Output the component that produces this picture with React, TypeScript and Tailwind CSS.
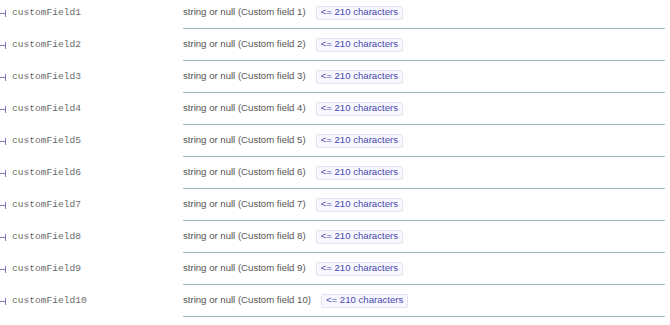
import React from "react";

const rows = Array.from({ length: 10 }, (_, i) => i + 1);

export default function App() {
  return (
    <div className="w-[670px] h-[325px] overflow-hidden bg-white">
      <div className="-mt-[3px] w-[665px]">
        {rows.map((n) => (
          <div key={n} className="flex h-[32px]">
            <div className="w-[183px] flex items-center shrink-0">
              <span className="block w-[5px] h-px bg-[#7c7cbb]" />
              <span className="block w-px h-[7px] bg-[#7c7cbb]" />
              <span
                className="ml-[6px] text-[9.6px] text-[#6a6a6a]"
                style={{ fontFamily: '"Liberation Mono", "Courier New", monospace' }}
              >
                customField{n}
              </span>
            </div>
            <div className="flex-1 flex items-center border-b border-[#9fb4be]">
              <span
                className="text-[9.6px] text-[#555]"
                style={{ fontFamily: '"Liberation Sans", Arial, sans-serif' }}
              >
                string or null (Custom field {n})
              </span>
              <span
                className="ml-[10px] px-[4px] h-[14px] flex items-center border border-[#e3e3f3] bg-[#f7f7fd] rounded-[2px] text-[9.6px] text-[#4848b2]"
                style={{ fontFamily: '"Liberation Sans", Arial, sans-serif' }}
              >
                &lt;= 210 characters
              </span>
            </div>
          </div>
        ))}
      </div>
    </div>
  );
}
